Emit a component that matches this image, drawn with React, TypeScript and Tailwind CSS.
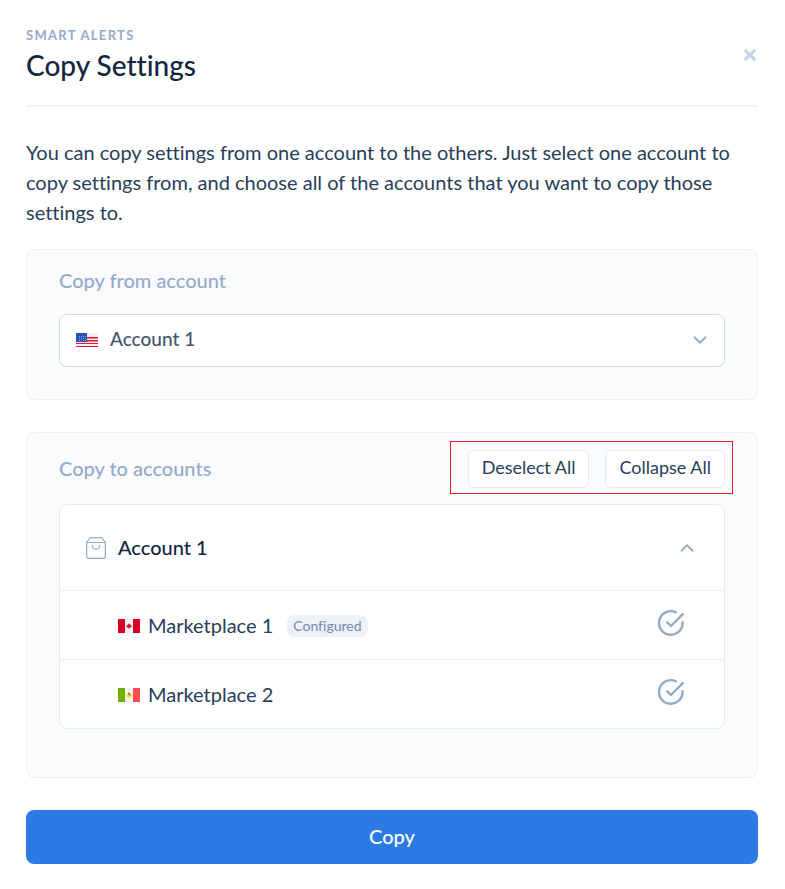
import { useState } from "react";
import { ChevronDown, ChevronUp } from "lucide-react";

function CloseIcon() {
  return (
    <svg viewBox="0 0 12 12" className="size-3" fill="none" stroke="#c8d5e6" strokeWidth="3.200" strokeLinecap="round" aria-hidden="true">
      <path d="M1.800 1.800l8.400 8.400M10.200 1.800l-8.400 8.400" />
    </svg>
  );
}

function FlagUS() {
  return (
    <svg viewBox="0 0 22 14" className="h-[14px] w-[22px]" aria-hidden="true">
      <rect width="22" height="14" fill="#f0f0f0" />
      {[4, 7, 10, 13].map((y) => (
        <rect key={y} y={y} width="22" height="1" fill="#dc1638" />
      ))}
      {[5, 8].map((y) => (
        <rect key={y} y={y} width="22" height="1" fill="#f4758b" />
      ))}
      <rect width="11" height="9" fill="#2b51b5" />
      {[3.5, 5.5, 7.5].map((y) =>
        [3.5, 5.5, 7.5, 9.5].map((x) => (
          <circle key={`${x}-${y}`} cx={x} cy={y} r="0.5" fill="#a9b8e0" />
        ))
      )}
    </svg>
  );
}

function FlagCanada() {
  return (
    <svg viewBox="0 0 22 14" className="h-[14px] w-[22px]" aria-hidden="true">
      <rect width="22" height="14" fill="#f3f3f4" />
      <rect width="7" height="14" fill="#d80027" />
      <rect x="15" width="7" height="14" fill="#d80027" />
      <path d="M11 4.200l.9 1.400.6-.2-.1 1 1.300-.2-.3 1 .5.300-1.700 1.300h-.8v1h-.8v-1h-.8L8.100 7.500l.5-.3-.3-1 1.300.2-.1-1 .6.200z" fill="#d80027" />
    </svg>
  );
}

function FlagMexico() {
  return (
    <svg viewBox="0 0 22 14" className="h-[14px] w-[22px]" aria-hidden="true">
      <rect width="22" height="14" fill="#f3f3f4" />
      <rect width="7" height="14" fill="#73af00" />
      <rect x="15" width="7" height="14" fill="#ff4b55" />
      <path d="M7.500 5.500c.5 3.500 2 4.700 3.600 4.700S14.300 9 14.700 5.500l-1.700.5-2-1-2 1z" fill="#ffe15a" />
      <path d="M10 4.200l1.500.8 1.300 3-1.500-.5L10 6z" fill="#a5652d" />
    </svg>
  );
}

function BagIcon() {
  return (
    <svg viewBox="0 0 20 22" className="h-[22px] w-5" fill="none" stroke="#95aac9" strokeWidth="1.200" strokeLinecap="round" strokeLinejoin="round" aria-hidden="true">
      <path d="M.7 5.500L3.400 1.500Q3.900.7 4.800.7h10.400q.9 0 1.400.8l2.700 4v13.800a2 2 0 0 1-2 2H2.700a2 2 0 0 1-2-2zM.7 5.500h18.600M6.300 8.500a3.700 3.700 0 0 0 7.400 0" />
    </svg>
  );
}

function CheckCircle({ checked }: { checked: boolean }) {
  return (
    <svg viewBox="0 0 26 26" className="size-[26px]" fill="none" stroke="#95aac9" strokeWidth="2.400" strokeLinecap="round" strokeLinejoin="round" aria-hidden="true">
      {checked ? (
        <>
          <path d="M24.600 12.200v.8A11.800 11.800 0 1 1 17.800 2.300" />
          <path d="M9.200 12.400l3.800 3.600L24.800 4.200" />
        </>
      ) : (
        <circle cx="13" cy="13" r="11.800" />
      )}
    </svg>
  );
}

const marketplaces = [
  { name: "Marketplace 1", flag: <FlagCanada />, configured: true },
  { name: "Marketplace 2", flag: <FlagMexico />, configured: false },
];

const smallButton =
  "h-[38px] rounded-md border border-[#e3ebf6] bg-white px-[13px] pb-1 text-[18px] leading-6 text-[#283e59]";

export default function App() {
  const [selected, setSelected] = useState([true, true]);
  const [open, setOpen] = useState(true);
  const all = selected.every(Boolean);

  return (
    <main className="bg-white pt-[27px] pr-[27px] pb-[25px] pl-[26px] font-['Lato',sans-serif] text-[#12263f] [font-variant-ligatures:none]">
      <header className="flex items-center justify-between border-b-2 border-[#edf2f9] pb-[22px]">
        <div>
          <p className="text-[13px] leading-4 font-bold tracking-widest text-[#95aac9]">SMART ALERTS</p>
          <h1 className="mt-1 text-[28px] leading-9 font-medium">Copy Settings</h1>
        </div>
        <button type="button" aria-label="Close" className="p-0.5">
          <CloseIcon />
        </button>
      </header>

      <p className="mt-[30px] text-[20px] leading-[30px] text-[#283e59]">
        You can copy settings from one account to the others. Just select one account to copy settings from, and choose
        all of the accounts that you want to copy those settings to.
      </p>

      <section className="mt-[22px] rounded-lg border border-[#eef1f6] bg-[#f9fbfd] px-8 pt-4 pb-8">
        <label htmlFor="source" className="block text-[20px] leading-7 font-medium text-[#95aac9]">
          Copy from account
        </label>
        <div className="relative mt-5">
          <select
            id="source"
            className="h-[53px] w-full appearance-none rounded-lg border border-[#d2ddec] bg-white pr-12 pb-0.5 pl-[50px] text-[19px] font-medium text-[#44566c]"
          >
            <option>Account 1</option>
          </select>
          <span className="pointer-events-none absolute inset-y-0 left-[17px] flex items-center pb-0.5">
            <FlagUS />
          </span>
          <span className="pointer-events-none absolute inset-y-0 right-3.5 flex items-center pb-0.5 text-[#95aac9]">
            <ChevronDown className="size-[22px]" strokeWidth={2} />
          </span>
        </div>
      </section>

      <section className="mt-8 rounded-lg border border-[#eef1f6] bg-[#f9fbfd] px-8 pt-[17px] pb-12">
        <div className="flex items-start justify-between">
          <h2 className="mt-1 text-[20px] leading-7 font-medium text-[#95aac9]">Copy to accounts</h2>
          <div className="relative flex gap-4">
            <span className="pointer-events-none absolute -top-[9px] -right-2 -bottom-1.5 -left-[18px] border border-[#ed1c24]" />
            <button type="button" className={smallButton} onClick={() => setSelected([!all, !all])}>
              {all ? "Deselect All" : "Select All"}
            </button>
            <button type="button" className={smallButton} onClick={() => setOpen(!open)}>
              {open ? "Collapse All" : "Expand All"}
            </button>
          </div>
        </div>

        <div className="mt-4 rounded-lg border border-[#e3ebf6] bg-white">
          <button
            type="button"
            aria-expanded={open}
            onClick={() => setOpen(!open)}
            className="flex h-[85px] w-full items-center px-[26px] text-[20px] leading-7 font-medium"
          >
            <BagIcon />
            <span className="mb-0.5 ml-3">Account 1</span>
            <ChevronUp className="ml-auto size-[22px] text-[#95aac9]" strokeWidth={2} />
          </button>
          {open && (
            <ul>
              {marketplaces.map((m, i) => (
                <li key={m.name} className="border-t border-[#edf2f9]">
                  <label className="flex h-[68px] items-center pr-10 pl-[58px] text-[20px]">
                    <span className="pt-0.5">{m.flag}</span>
                    <span className="ml-2 text-[#283e59]">{m.name}</span>
                    {m.configured && (
                      <span className="mt-0.5 ml-3.5 rounded-lg bg-[#eef1f6] px-1.5 text-[14px] leading-[22px] text-[#7789ad]">
                        Configured
                      </span>
                    )}
                    <input
                      type="checkbox"
                      className="sr-only"
                      checked={selected[i]}
                      onChange={() => setSelected(selected.map((v, j) => (j === i ? !v : v)))}
                    />
                    <span className="ml-auto pb-1">
                      <CheckCircle checked={selected[i]} />
                    </span>
                  </label>
                </li>
              ))}
            </ul>
          )}
        </div>
      </section>

      <button
        type="button"
        className="mt-8 h-[54px] w-full rounded-lg bg-[#2c7be5] pb-0.5 text-[20px] font-medium text-white"
      >
        Copy
      </button>
    </main>
  );
}
